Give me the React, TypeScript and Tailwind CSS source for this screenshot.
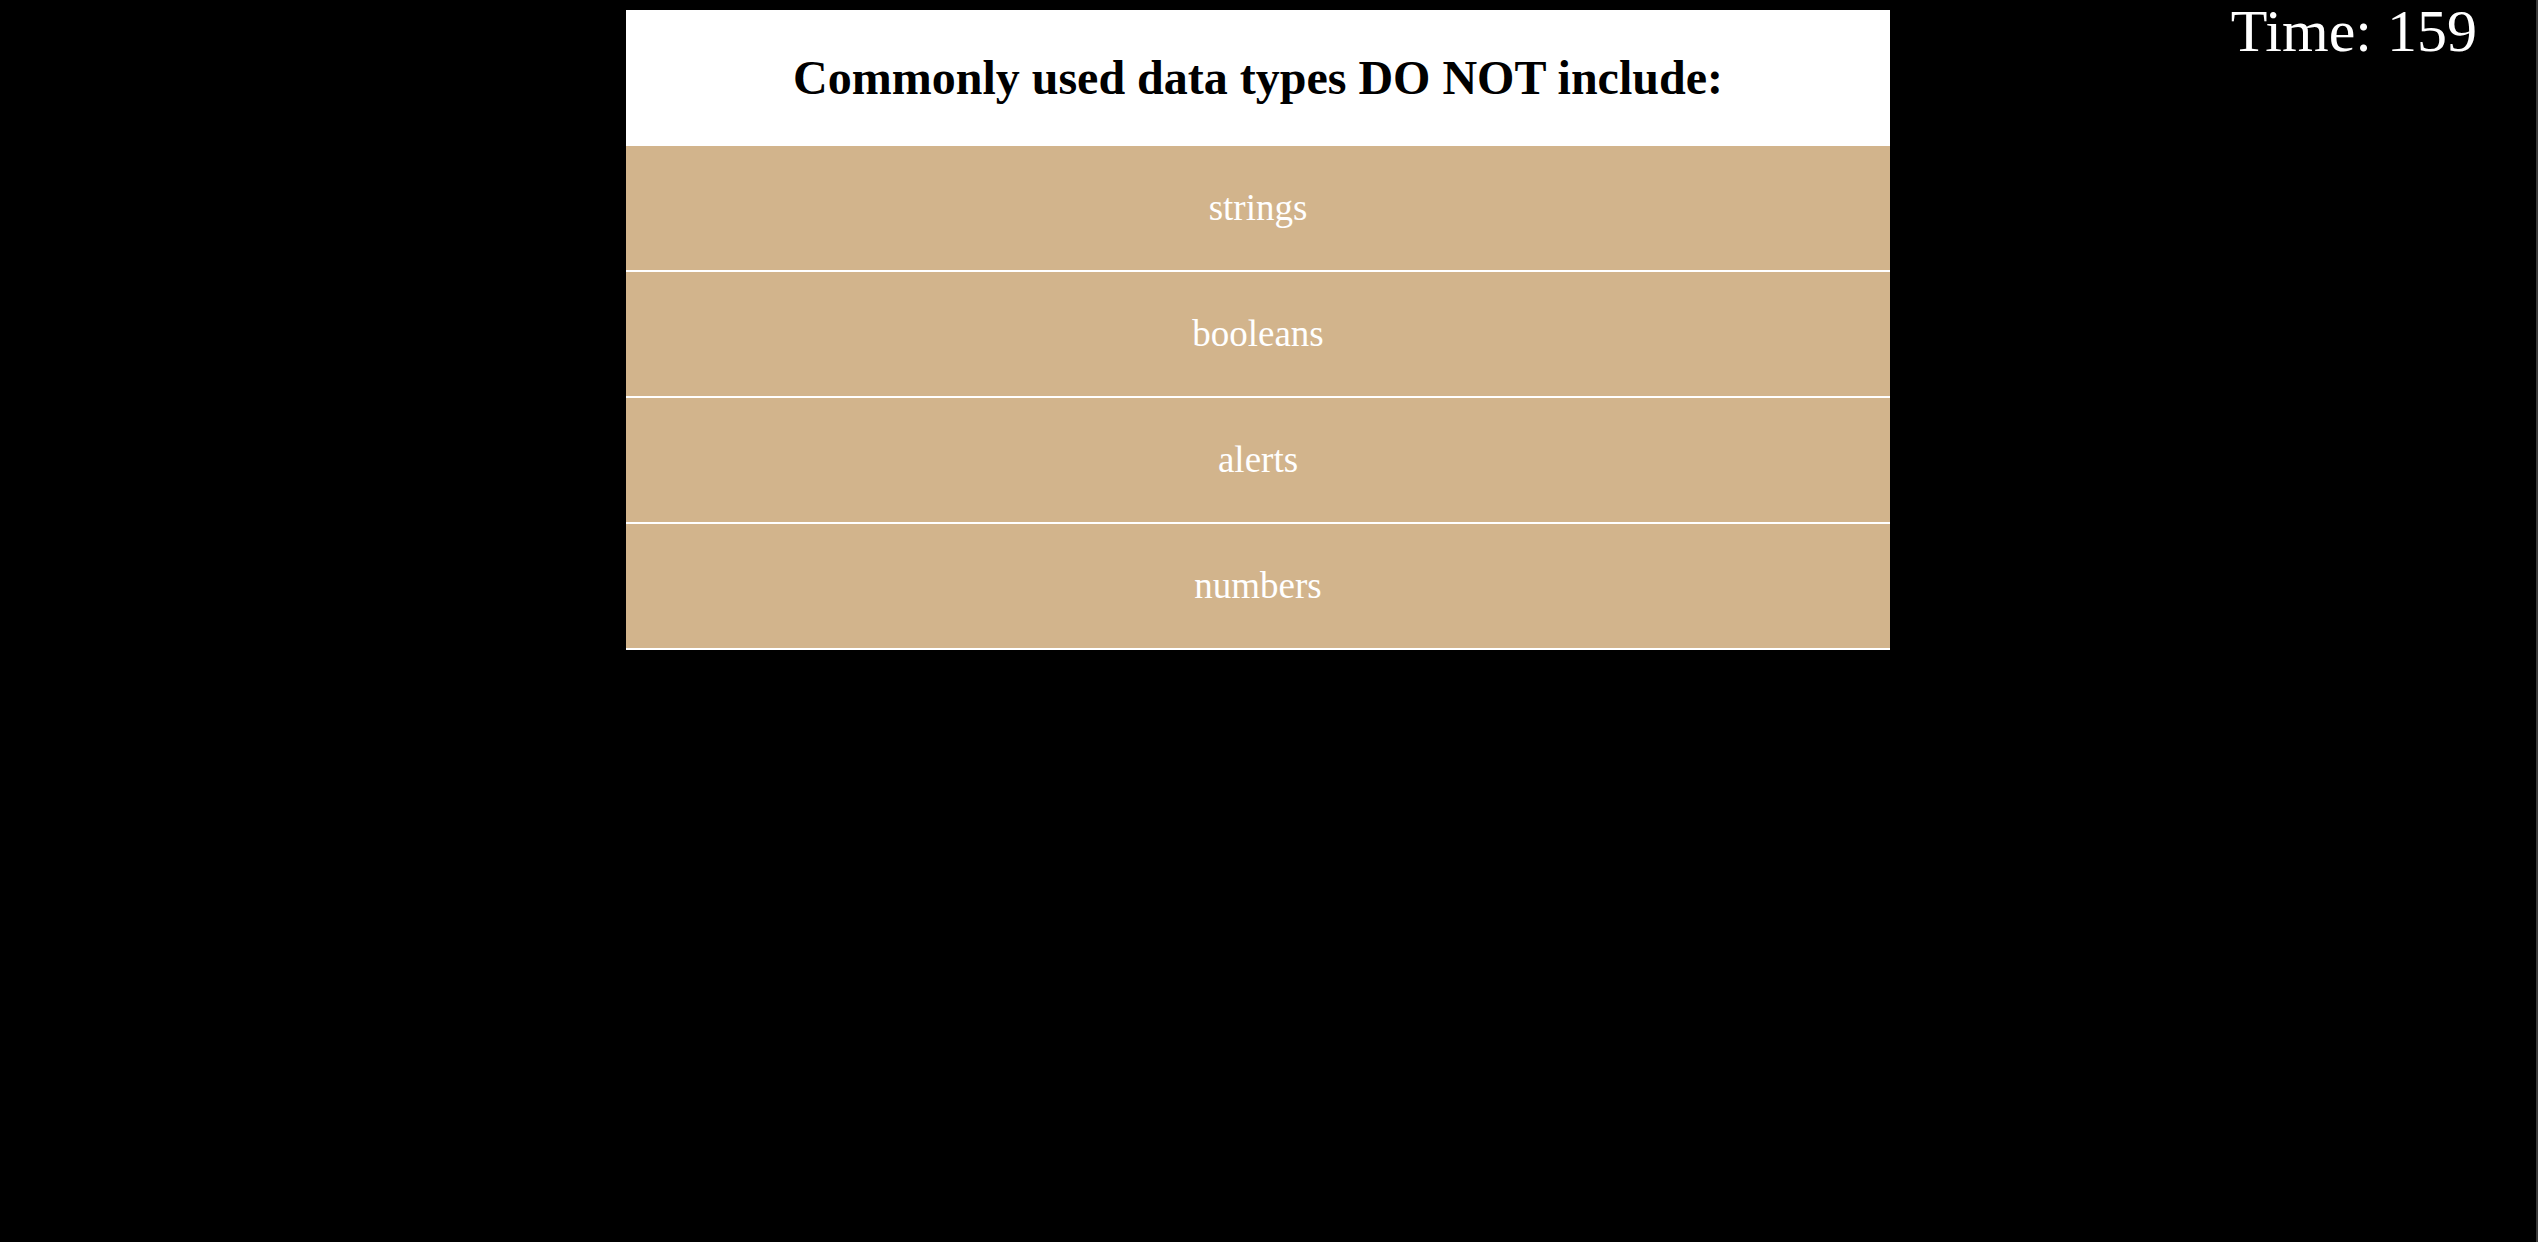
import React from "react";

const options = ["strings", "booleans", "alerts", "numbers"];

export default function App() {
  return (
    <div className="relative min-h-[1242px] w-full border-r-2 border-[#3a3a3a] bg-black" style={{ fontFamily: '"Liberation Serif", "Times New Roman", serif' }}>
      <div className="absolute right-[59px] top-[1px] text-[60px] leading-none text-white">Time: 159</div>
      <div className="pt-[10px] pl-[626px]">
        <div className="w-[1264px]">
          <div className="flex h-[136px] items-center justify-center bg-white">
            <h1 className="text-[48px] font-bold text-black">Commonly used data types DO NOT include:</h1>
          </div>
          {options.map((o) => (
            <div key={o} className="flex h-[126px] items-center justify-center border-b-2 border-white bg-[#d2b48c] text-[37px] text-white">
              {o}
            </div>
          ))}
        </div>
      </div>
    </div>
  );
}
